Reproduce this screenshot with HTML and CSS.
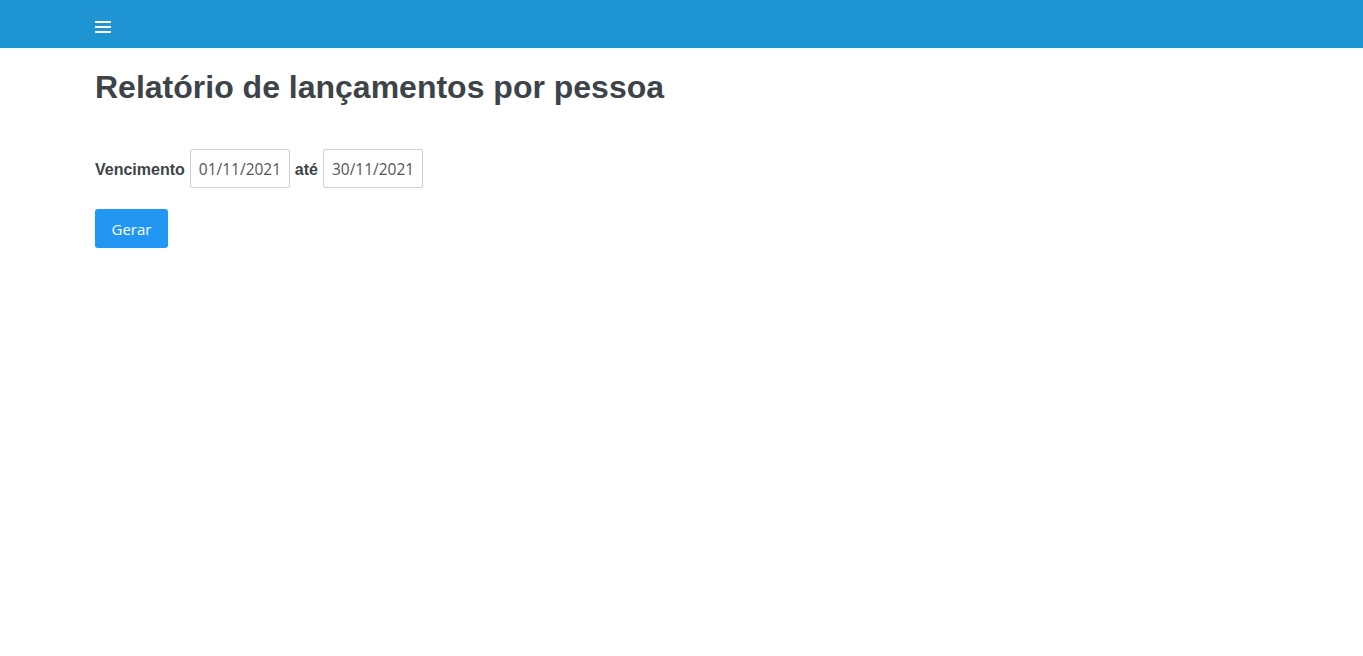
FILE: index.html
```html
<!DOCTYPE html>
<html lang="pt">
<head>
<meta charset="utf-8">
<title>Relatório</title>
<link rel="stylesheet" href="styles.css">
</head>
<body>
<header class="topbar">
  <div class="container">
    <button class="menu" aria-label="Menu">
      <svg width="16" height="12" viewBox="0 0 16 12"><rect x="0" y="0" width="16" height="2" fill="#fff"/><rect x="0" y="5" width="16" height="2" fill="#fff"/><rect x="0" y="10" width="16" height="2" fill="#fff"/></svg>
    </button>
  </div>
</header>
<main class="container">
  <h1 class="title">Relatório de lançamentos por pessoa</h1>
  <form class="filters">
    <div class="row">
      <label class="lbl">Vencimento</label>
      <input class="field" type="text" value="01/11/2021">
      <label class="lbl">até</label>
      <input class="field" type="text" value="30/11/2021">
    </div>
    <button type="button" class="btn">Gerar</button>
  </form>
</main>
</body>
</html>
```
FILE: styles.css
```css
* { box-sizing: border-box; }
body { margin: 0; background: #fff; font-family: "Open Sans", sans-serif; color: #3d4449; }
.container { padding-left: 95px; }
.topbar { height: 48px; background: #1e94d2; display: flex; align-items: center; }
.menu { background: none; border: 0; padding: 0; display: flex; cursor: pointer; margin-top: 6px; }
.title { font-family: "Liberation Sans", Arial, sans-serif; font-weight: bold; font-size: 32px; margin: 19px 0 0; line-height: 40px; color: #3d4449; }
.filters { margin-top: 42px; display: flex; flex-direction: column; align-items: flex-start; gap: 21px; }
.row { display: flex; align-items: center; gap: 5px; }
.lbl { font-family: "Liberation Sans", Arial, sans-serif; font-weight: bold; font-size: 16px; color: #3d4449; padding-top: 2px; }
.field { width: 100px; height: 39px; border: 1px solid #d0d0d0; border-radius: 2px; padding: 0 8px; font-family: "Open Sans", sans-serif; font-size: 15.5px; color: #555; }
.btn { width: 73px; height: 39px; border: 0; border-radius: 3px; background: #2196f3; color: #fff; font-family: "Open Sans", sans-serif; font-size: 15px; cursor: pointer; }
```
